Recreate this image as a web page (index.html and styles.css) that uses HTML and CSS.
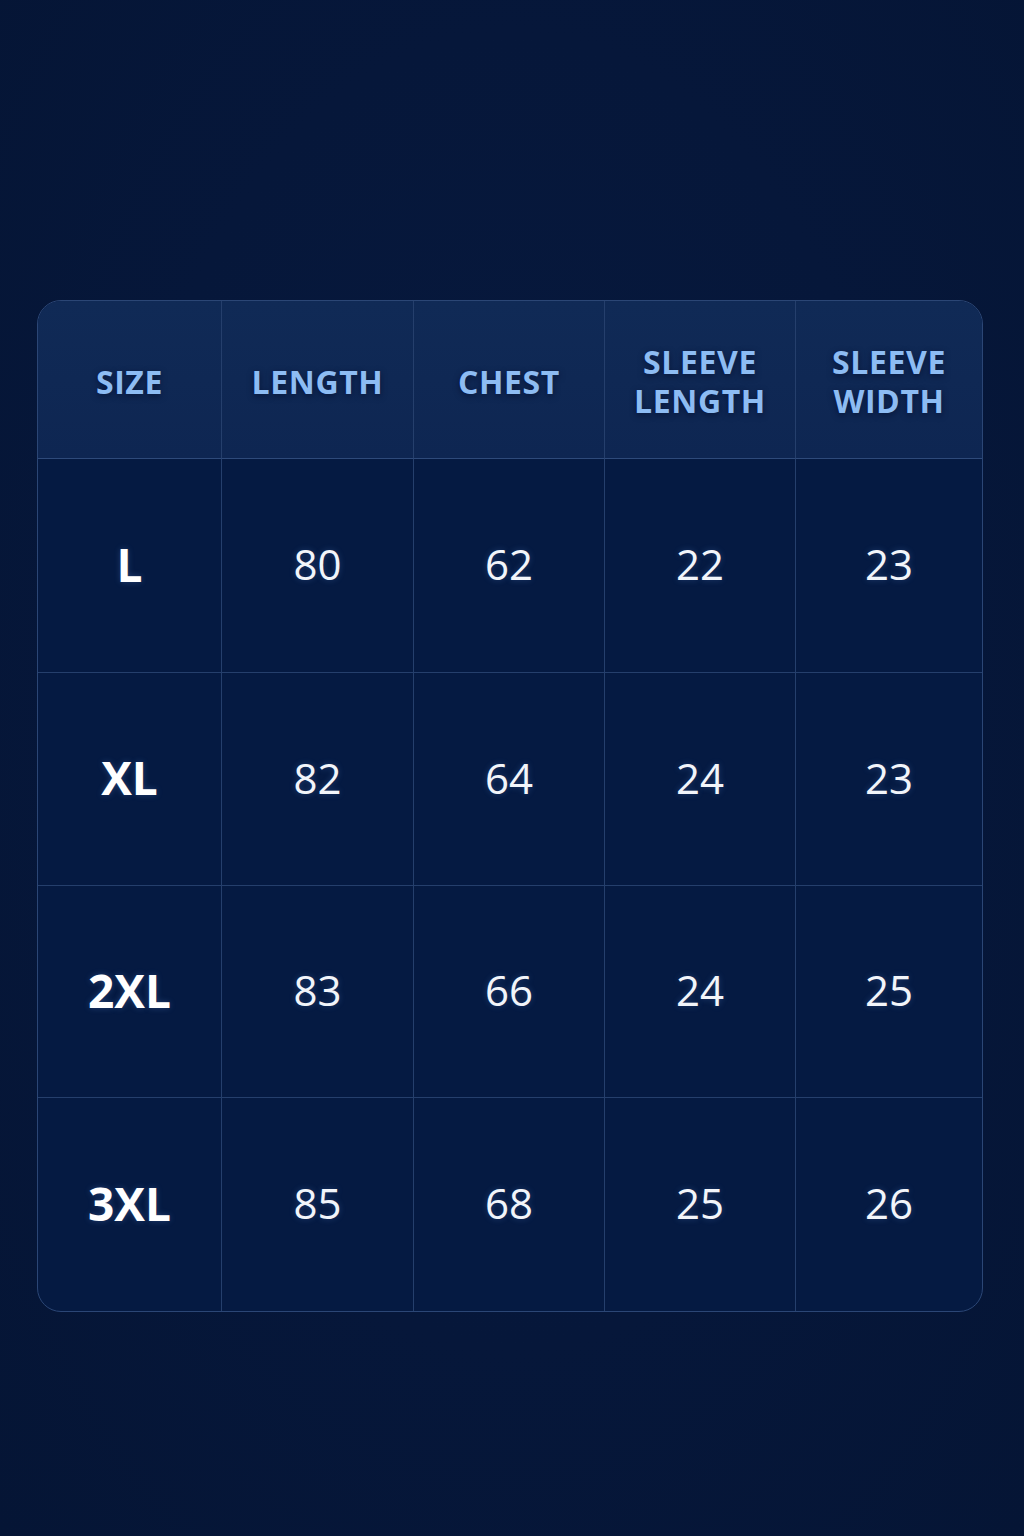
FILE: index.html
```html
<!DOCTYPE html>
<html lang="en">
<head>
<meta charset="utf-8">
<title>Size Chart</title>
<link rel="stylesheet" href="styles.css">
</head>
<body>
<main class="page">
  <div class="chart">
    <div class="cell head">SIZE</div>
    <div class="cell head">LENGTH</div>
    <div class="cell head">CHEST</div>
    <div class="cell head">SLEEVE<br>LENGTH</div>
    <div class="cell head last">SLEEVE<br>WIDTH</div>

    <div class="cell size">L</div>
    <div class="cell">80</div>
    <div class="cell">62</div>
    <div class="cell">22</div>
    <div class="cell last">23</div>

    <div class="cell size">XL</div>
    <div class="cell">82</div>
    <div class="cell">64</div>
    <div class="cell">24</div>
    <div class="cell last">23</div>

    <div class="cell size">2XL</div>
    <div class="cell">83</div>
    <div class="cell">66</div>
    <div class="cell">24</div>
    <div class="cell last">25</div>

    <div class="cell size bottom">3XL</div>
    <div class="cell bottom">85</div>
    <div class="cell bottom">68</div>
    <div class="cell bottom">25</div>
    <div class="cell bottom last">26</div>
  </div>
</main>
</body>
</html>
```
FILE: styles.css
```css
html, body {
  margin: 0;
  padding: 0;
}
body {
  width: 1024px;
  height: 1536px;
  background: radial-gradient(ellipse at 50% 45%, #07193e 0%, #06173a 55%, #051535 100%);
  font-family: "Open Sans", "Noto Sans", sans-serif;
}
.page {
  padding: 300px 0 0 37px;
}
.chart {
  width: 946px;
  box-sizing: border-box;
  display: grid;
  grid-template-columns: 184px 192px 191px 191px 1fr;
  grid-template-rows: 158px 214px 213px 212px 213px;
  border: 1px solid #2b4675;
  border-radius: 24px;
  overflow: hidden;
  background: #051a42;
}
.cell {
  display: flex;
  align-items: center;
  justify-content: center;
  text-align: center;
  box-sizing: border-box;
  padding-bottom: 4px;
  border-right: 1px solid #253f6c;
  border-bottom: 1px solid #253f6c;
  color: #f2f5fa;
  font-size: 42px;
  font-weight: 400;
  text-shadow: 0 0 6px rgba(120, 170, 255, 0.25);
}
.cell.last {
  border-right: none;
}
.cell.bottom {
  border-bottom: none;
}
.head {
  background: linear-gradient(180deg, #102a56 0%, #0e2652 100%);
  border-bottom-color: #2e4a7a;
  color: #8dbcf3;
  font-size: 32px;
  font-weight: 700;
  letter-spacing: 0.6px;
  line-height: 39px;
  text-shadow: 0 2px 6px rgba(0, 10, 40, 0.6);
  padding-top: 3px;
  padding-bottom: 0;
}
.size {
  font-weight: 700;
  font-size: 46px;
  color: #ffffff;
}
```
